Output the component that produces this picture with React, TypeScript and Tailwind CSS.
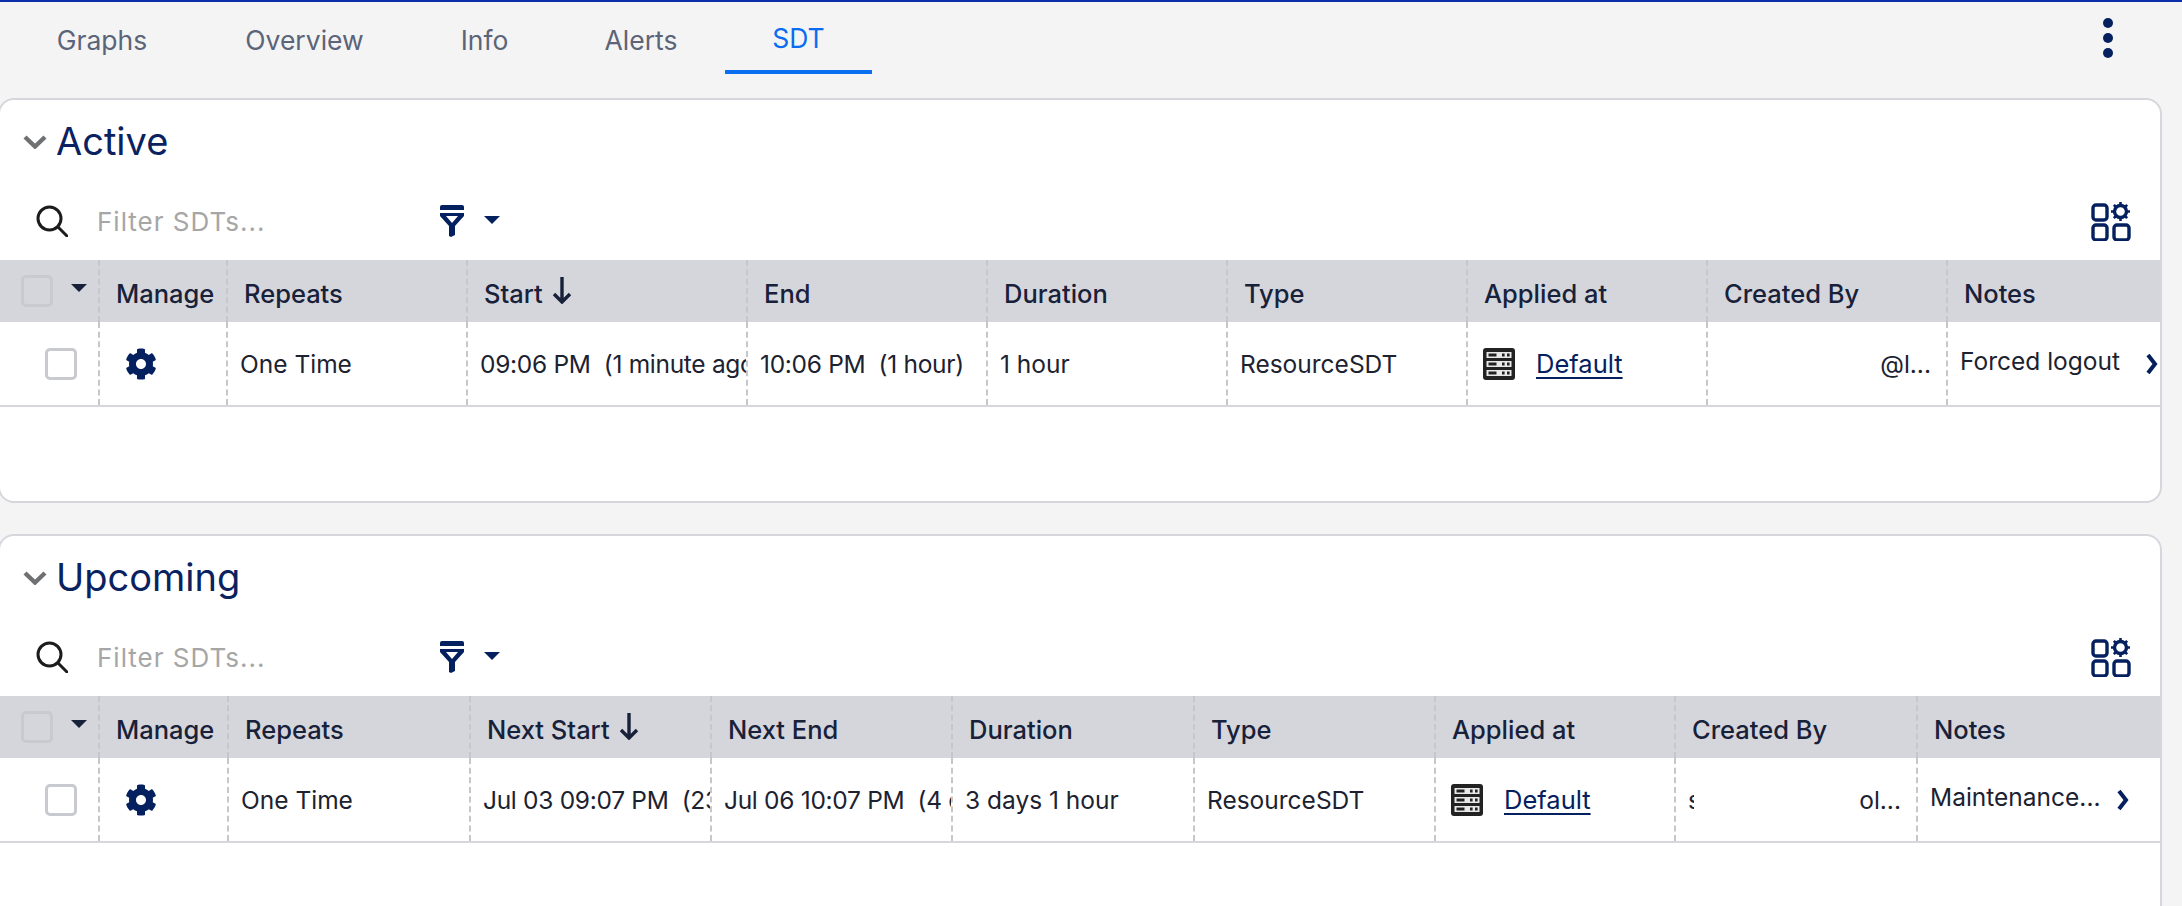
import { FaCog } from "react-icons/fa";

const navy = "#04205f";

function Caret({ className }: { className: string }) {
  return (
    <svg viewBox="0 0 16 8" className={className} fill="currentColor">
      <path d="M0 0h16L8 8z" />
    </svg>
  );
}

function SearchIcon() {
  return (
    <svg viewBox="0 0 32 32" className="w-8 h-8 shrink-0" fill="none" stroke="#1c1c1c" strokeWidth="3">
      <circle cx="13.5" cy="13.5" r="11.5" />
      <path d="M22 22l9 9" strokeLinecap="round" />
    </svg>
  );
}

function FilterIcon() {
  return (
    <svg viewBox="0 0 24 32" className="w-6 h-8" fill={navy}>
      <path d="M0 2a2 2 0 0 1 2-2h20a2 2 0 0 1 2 2v3H0z" />
      <path d="M0 8h24v3l-9 10v9l-4 2-2-1V21L0 11zM6 11l6 7 6-7z" fillRule="evenodd" />
    </svg>
  );
}

function ColumnsIcon() {
  return (
    <svg viewBox="0 0 40 40" className="w-10 h-10" fill="none" stroke={navy} strokeWidth="3.4">
      <rect x="2" y="4" width="14" height="15" rx="3" />
      <rect x="2" y="24" width="14" height="15" rx="3" />
      <rect x="23" y="24" width="15" height="15" rx="3" />
      <circle cx="29.5" cy="10.5" r="6" />
      <path
        d="M29.5 1v3M29.5 17v3M20 10.5h3M36 10.5h3M22.8 3.8l2.2 2.2M34 15l2.2 2.2M36.2 3.8L34 6M25 15l-2.2 2.2"
        strokeWidth="2.6"
      />
    </svg>
  );
}

function ServerIcon() {
  return (
    <svg viewBox="0 0 32 32" className="w-8 h-8 shrink-0">
      <rect width="32" height="32" rx="3" fill="#222" />
      {[4, 13, 22].map((y) => (
        <g key={y}>
          <rect x="3.5" y={y} width="25" height="6" fill="#e8e8e8" />
          <rect x="5.5" y={y + 1.5} width="8" height="3" fill="#222" />
          <rect x="19" y={y + 1.5} width="2.6" height="3" fill="#222" />
          <rect x="24" y={y + 1.5} width="2.6" height="3" fill="#222" />
        </g>
      ))}
    </svg>
  );
}

function SortArrow() {
  return (
    <svg viewBox="0 0 20 28" className="w-5 h-7 ml-[9px] -mt-[10px]" fill="none" stroke="#18213a" strokeWidth="3.4">
      <path d="M10 1v25M2 18l8 8 8-8" />
    </svg>
  );
}

function Chevron({ className }: { className: string }) {
  return (
    <svg viewBox="0 0 12 22" className={className} fill="none" stroke={navy} strokeWidth="4">
      <path d="M2 2l7 9-7 9" />
    </svg>
  );
}

function Checkbox() {
  return <div className="w-8 h-8 border-[3px] border-[#c9cacf] rounded-[5px]" />;
}

const headCell =
  "flex items-center pl-[16px] pt-[7px] whitespace-nowrap overflow-hidden border-l-2 border-dashed border-[#c6c7cc]";
const bodyCell =
  "flex items-center pl-[12px] pt-[1px] whitespace-pre overflow-hidden border-l-2 border-dashed border-[#c6c7cc]";

function SdtCard(props: {
  title: string;
  grid: string;
  cardClass: string;
  startLabel: string;
  endLabel: string;
  repeats: string;
  start: string;
  end: string;
  duration: string;
  createdLeft: string;
  createdRight: string;
  notes: string;
  chevronClass: string;
}) {
  return (
    <section className={`ml-[-2px] w-[2164px] bg-white border-2 border-[#d6d7dc] rounded-[16px] ${props.cardClass}`}>
      <div className="h-[88px] flex items-center pl-[23px]">
        <svg viewBox="0 0 24 14" className="w-6 h-[14px] mt-[-4px]" fill="none" stroke="#6f7072" strokeWidth="4.4">
          <path d="M2 2l10 9.5L22 2" />
        </svg>
        <h2 className="ml-[9px] text-[38px] leading-none text-[#0b2260] mt-[-6px]">{props.title}</h2>
      </div>

      <div className="h-[72px] flex items-center pl-[36px] pr-[29px] pb-[6px]">
        <SearchIcon />
        <span className="ml-[29px] w-[343px] text-[26px] tracking-[1px] text-[#a6a6a6]">Filter SDTs...</span>
        <FilterIcon />
        <Caret className="w-4 h-2 ml-[20px] mt-[-3px] text-[#04205f]" />
        <div className="ml-auto">
          <ColumnsIcon />
        </div>
      </div>

      <div className={`grid ${props.grid} h-[62px] bg-[#d5d6db] text-[25.5px] font-medium text-[#18213a]`}>
        <div className="flex items-center pl-[21px]">
          <Checkbox />
          <Caret className="w-4 h-2 ml-[18px] mt-[-6px] text-[#18213a]" />
        </div>
        <div className={headCell}>Manage</div>
        <div className={headCell}>Repeats</div>
        <div className={headCell}>
          {props.startLabel}
          <SortArrow />
        </div>
        <div className={headCell}>{props.endLabel}</div>
        <div className={headCell}>Duration</div>
        <div className={headCell}>Type</div>
        <div className={headCell}>Applied at</div>
        <div className={headCell}>Created By</div>
        <div className={headCell}>Notes</div>
      </div>

      <div className={`grid ${props.grid} h-[85px] border-b-2 border-[#d6d7dc] text-[24.5px] text-[#1c2230]`}>
        <div className="flex items-center pl-[45px]">
          <Checkbox />
        </div>
        <div className={bodyCell + " pl-[25px]"}>
          <FaCog className="w-8 h-8" color={navy} />
        </div>
        <div className={bodyCell}>{props.repeats}</div>
        <div className={bodyCell + " tracking-[-0.3px]"}>{props.start}</div>
        <div className={bodyCell + " tracking-[-0.3px]"}>{props.end}</div>
        <div className={bodyCell}>{props.duration}</div>
        <div className={bodyCell}>ResourceSDT</div>
        <div className={bodyCell + " pl-[15px]"}>
          <ServerIcon />
          <a className="ml-[21px] text-[25.5px] text-[#04205f] underline underline-offset-4">Default</a>
        </div>
        <div className={bodyCell + " justify-between pr-[15px]"}>
          <span className="w-[6px] overflow-hidden">{props.createdLeft}</span>
          <span>{props.createdRight}</span>
        </div>
        <div className={bodyCell}>
          <span className="mt-[-6px]">{props.notes}</span>
          <Chevron className={props.chevronClass} />
        </div>
      </div>
    </section>
  );
}

export default function App() {
  const tabs = [
    { label: "Graphs", w: "w-[190px]" },
    { label: "Overview", w: "w-[215px]" },
    { label: "Info", w: "w-[145px]" },
    { label: "Alerts", w: "w-[168px]" },
  ];

  return (
    <div className="w-[2182px] h-[906px] overflow-hidden bg-[#f4f4f4] border-t-2 border-[#0a2fa8] font-['Inter',sans-serif]">
      <div className="h-[72px] flex items-start pl-[7px] mb-[24px]">
        {tabs.map((t) => (
          <div key={t.label} className={`${t.w} h-[72px] flex items-center justify-center pt-[5px] text-[26.5px] text-[#5b6478]`}>
            {t.label}
          </div>
        ))}
        <div className="w-[147px] h-[72px] flex items-center justify-center pt-[5px] text-[26.5px] text-[#0a6cf0] border-b-4 border-[#0a6ff0]">
          SDT
        </div>
        <div className="ml-auto mr-[69px] mt-[16px] flex flex-col gap-[5px]">
          <div className="w-[10px] h-[10px] rounded-full bg-[#04205f]" />
          <div className="w-[10px] h-[10px] rounded-full bg-[#04205f]" />
          <div className="w-[10px] h-[10px] rounded-full bg-[#04205f]" />
        </div>
      </div>

      <SdtCard
        title="Active"
        grid="grid-cols-[98px_128px_240px_280px_240px_240px_240px_240px_240px_214px]"
        cardClass="h-[405px] mb-[31px]"
        startLabel="Start"
        endLabel="End"
        repeats="One Time"
        start="09:06 PM  (1 minute ago)"
        end="10:06 PM  (1 hour)"
        duration="1 hour"
        createdLeft=""
        createdRight="@l..."
        notes="Forced logout"
        chevronClass="w-3 h-[22px] ml-[26px] shrink-0"
      />

      <SdtCard
        title="Upcoming"
        grid="grid-cols-[98px_129px_242px_241px_241px_242px_241px_240px_242px_245px]"
        cardClass="h-[500px] rounded-b-none"
        startLabel="Next Start"
        endLabel="Next End"
        repeats="One Time"
        start="Jul 03 09:07 PM  (23 hours)"
        end="Jul 06 10:07 PM  (4 days)"
        duration="3 days 1 hour"
        createdLeft="s"
        createdRight="ol..."
        notes="Maintenance..."
        chevronClass="w-3 h-[22px] ml-[16px] shrink-0"
      />
    </div>
  );
}
